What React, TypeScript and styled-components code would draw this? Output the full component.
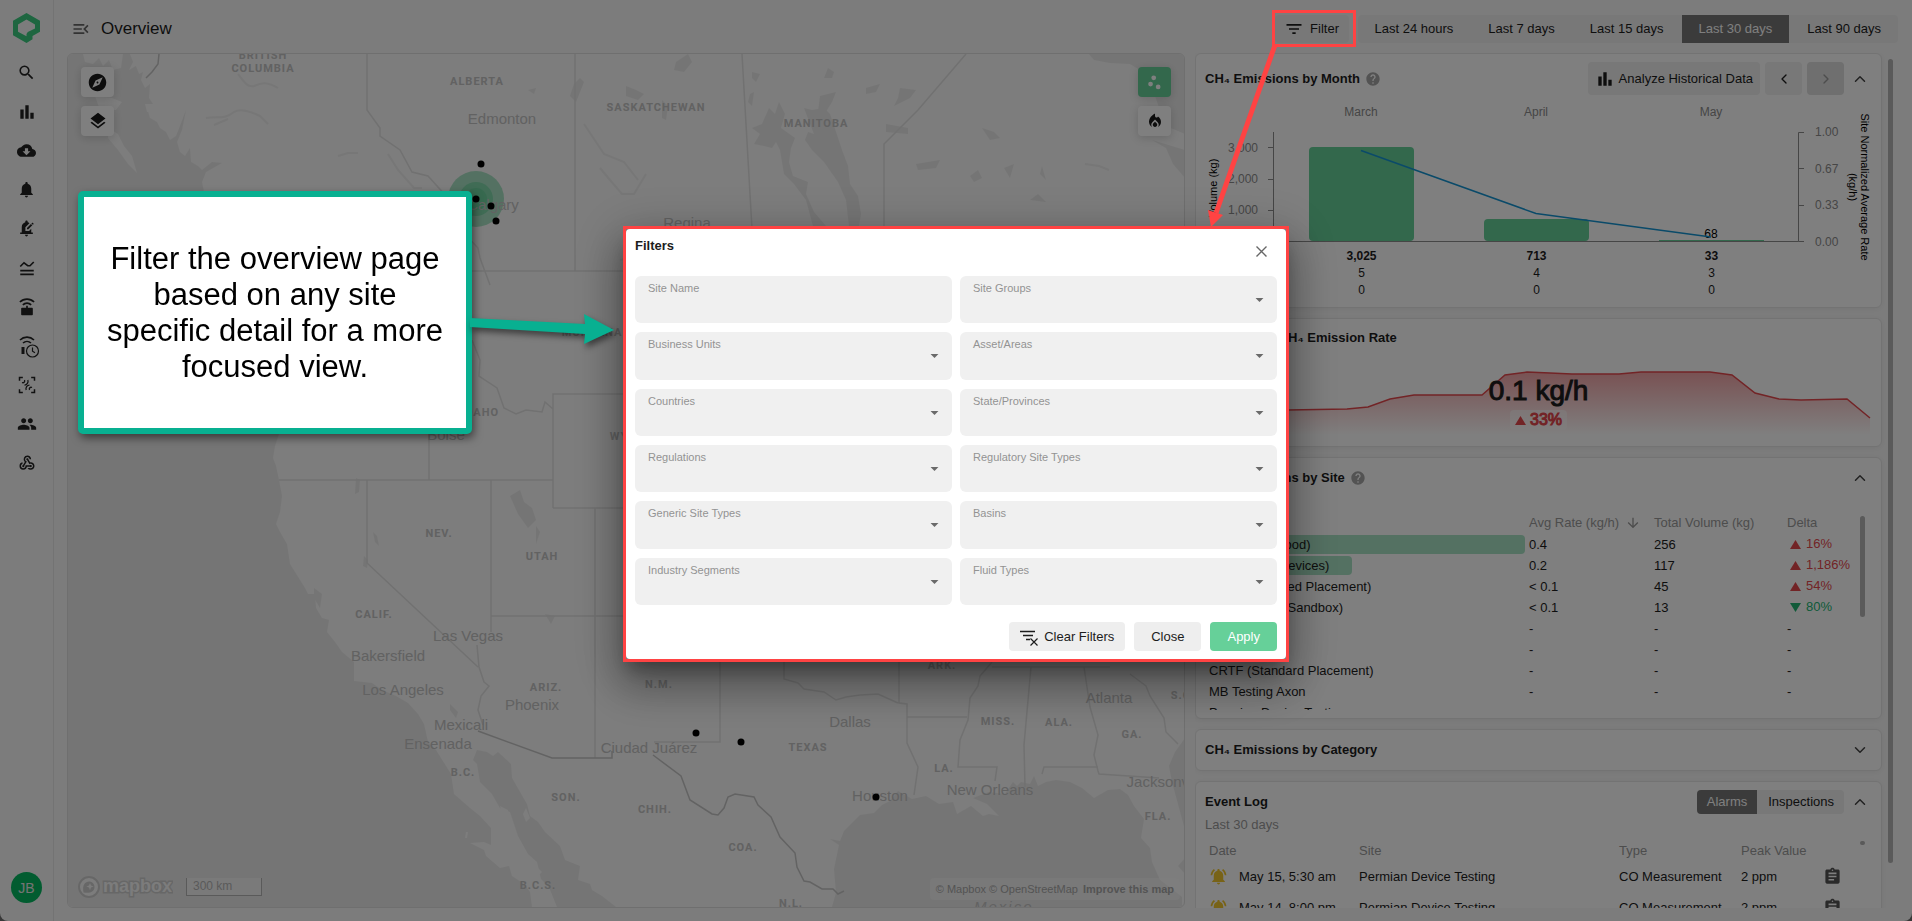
import React from 'react';
import styled, { createGlobalStyle, css } from 'styled-components';
import {
  MdArrowDownward,
  MdArrowDropDown,
  MdAssignment,
  MdBarChart,
  MdCloudDownload,
  MdEditNotifications,
  MdExplore,
  MdFilterList,
  MdHelp,
  MdLayers,
  MdLocalFireDepartment,
  MdMenuOpen,
  MdNotifications,
  MdNotificationsActive,
  MdPeople,
  MdScatterPlot,
  MdSearch,
  MdWebhook,
} from 'react-icons/md';
import { ChevronDown, ChevronLeft, ChevronRight, ChevronUp } from 'lucide-react';

const color = {
  page: '#f9f9f9',
  card: '#ffffff',
  line: '#e6e6e6',
  control: '#f0f0f0',
  active: '#767676',
  ink: '#1c1c1c',
  muted: '#9a9a9a',
  green: '#66d099',
  red: '#e5484d',
  callout: '#08b091',
  marker: '#ff4343',
};

const GlobalStyle = createGlobalStyle`
  *, *::before, *::after { box-sizing: border-box; }
  html, body, #root { height: 100%; }
  body {
    margin: 0;
    background: #707070;
    color: ${color.ink};
    font: 13px/16px "Liberation Sans", Arial, sans-serif;
    overflow: hidden;
  }
  button, input, select { font: inherit; color: inherit; }
  h1, h2, p, figure { margin: 0; }
`;

/* ---------- Shell ---------- */

const Shell = styled.div`
  display: flex;
  height: 100vh;
  background: ${color.page};
  border-radius: 0 0 8px 8px;
  overflow: hidden;
`;

const Sidebar = styled.nav`
  display: flex;
  flex-direction: column;
  align-items: center;
  flex: none;
  width: 54px;
  padding: 13px 0 18px;
  border-right: 1px solid ${color.line};
`;

const SideLink = styled.a`
  display: flex;
  align-items: center;
  justify-content: center;
  width: 39px;
  height: 39px;
  color: #222;
`;

const SideList = styled.div`
  display: flex;
  flex-direction: column;
  flex: 1;
  margin-top: 10px;
`;

const Avatar = styled.button`
  width: 31px;
  height: 31px;
  padding: 0;
  border: 0;
  border-radius: 50%;
  background: #04b860;
  color: #e8e8e8;
  font-size: 14px;
`;

const Page = styled.div`
  display: flex;
  flex-direction: column;
  flex: 1;
  min-width: 0;
  padding: 0 14px 13px 13px;
`;

const TopBar = styled.header`
  display: flex;
  align-items: center;
  flex: none;
  height: 53px;
  padding: 5px 0 0;
`;

const MenuButton = styled.button`
  display: flex;
  padding: 0;
  margin: 0 10px 0 4px;
  border: 0;
  background: none;
  color: #666;
`;

const PageTitle = styled.h1`
  flex: 1;
  font-size: 17px;
  line-height: 20px;
  font-weight: 400;
`;

const softButton = css`
  display: flex;
  align-items: center;
  justify-content: center;
  border: 0;
  border-radius: 4px;
  background: ${color.control};
  white-space: nowrap;
`;

const FilterAnchor = styled.div`
  position: relative;
  margin-right: 9px;
`;

const FilterButton = styled.button`
  ${softButton}
  gap: 6px;
  width: 74px;
  height: 28px;
  padding: 0;
`;

const Highlight = styled.div`
  position: absolute;
  inset: -5px -7px -4px -3px;
  border: 3px solid ${color.marker};
  z-index: 30;
`;

const FilterArrow = styled.svg`
  position: absolute;
  left: -67px;
  top: 28px;
  z-index: 30;
  pointer-events: none;
`;

const Segments = styled.div`
  display: flex;
  gap: 1px;
  overflow: hidden;
  border-radius: 4px;
  background: ${color.control};
`;

const Segment = styled.button<{ $active?: boolean; $small?: boolean }>`
  height: ${(p) => (p.$small ? 24 : 28)}px;
  padding: 0 ${(p) => (p.$small ? 10 : 17)}px;
  border: 0;
  background: ${(p) => (p.$active ? color.active : 'transparent')};
  color: ${(p) => (p.$active ? '#fff' : color.ink)};
  white-space: nowrap;
`;

const Columns = styled.main`
  display: grid;
  grid-template-columns: minmax(0, 1118fr) minmax(0, 703fr);
  gap: 10px;
  flex: 1;
  min-height: 0;
`;

/* ---------- Map ---------- */

const MapPanel = styled.section`
  position: relative;
  overflow: hidden;
  border: 1px solid #dedede;
  border-radius: 6px;
  background: #fafafa;
`;

const MapCanvas = styled.svg`
  display: block;
  width: 100%;
  height: 100%;
`;

const MapTools = styled.div<{ $side: 'left' | 'right' }>`
  position: absolute;
  top: 13px;
  ${(p) => p.$side}: 13px;
  display: flex;
  flex-direction: column;
  gap: 9px;
`;

const MapTool = styled.button<{ $on?: boolean }>`
  display: flex;
  align-items: center;
  justify-content: center;
  width: 33px;
  height: 30px;
  padding: 0;
  border: 0;
  border-radius: 4px;
  background: ${(p) => (p.$on ? color.green : '#fff')};
  color: ${(p) => (p.$on ? '#fff' : '#1a1a1a')};
  box-shadow: 0 2px 10px rgba(0, 0, 0, 0.16);
`;

const MapFooter = styled.div`
  position: absolute;
  left: 9px;
  bottom: 8px;
  display: flex;
  align-items: center;
  gap: 13px;
`;

const ScaleBar = styled.div`
  width: 76px;
  height: 18px;
  padding-left: 6px;
  border: 1px solid #b4b4b4;
  border-top: 0;
  background: rgba(255, 255, 255, 0.5);
  color: #b4b4b4;
  font-size: 12px;
  line-height: 17px;
`;

const Attribution = styled.div`
  position: absolute;
  right: 4px;
  bottom: 7px;
  display: flex;
  gap: 3px;
  padding: 3px 6px;
  border-radius: 4px;
  background: rgba(255, 255, 255, 0.35);
  font-size: 11px;

  a {
    color: #a8a8a8;
    text-decoration: none;
  }
  a:last-child {
    margin-left: 2px;
    font-weight: 700;
  }
`;

/* ---------- Cards ---------- */

const SidePanel = styled.aside`
  display: flex;
  min-height: 0;
  overflow: hidden;
`;

const CardStack = styled.div`
  display: flex;
  flex-direction: column;
  flex: 1;
  gap: 10px;
  min-width: 0;
`;

const PanelThumb = styled.div`
  flex: none;
  width: 5px;
  height: 94%;
  margin: 6px 5px 0 6px;
  border-radius: 3px;
  background: #b4b4b4;
`;

const Card = styled.section`
  position: relative;
  flex: none;
  padding: 8px 9px;
  border: 1px solid ${color.line};
  border-radius: 6px;
  background: ${color.card};
  box-shadow: 0 1px 6px rgba(0, 0, 0, 0.06);
`;

const CardHead = styled.div<{ $low?: boolean }>`
  display: flex;
  align-items: center;
  min-height: ${(p) => (p.$low ? 22 : 24)}px;
`;

const CardTitle = styled.h2`
  display: flex;
  align-items: center;
  gap: 5px;
  flex: 1;
  font-size: 13px;
  font-weight: 700;
  white-space: nowrap;

  svg {
    color: #a6a6a6;
  }
`;

const ToolGroup = styled.div`
  display: flex;
  gap: 5px;
`;

const ToolButton = styled.button<{ $dim?: boolean }>`
  ${softButton}
  gap: 4px;
  min-width: 37px;
  height: 33px;
  padding: 0 7px;
  background: ${(p) => (p.$dim ? '#dedede' : color.control)};
  color: ${(p) => (p.$dim ? '#9a9a9a' : color.ink)};
`;

const Toggle = styled.button`
  display: flex;
  margin: 0 3px 0 7px;
  padding: 0;
  border: 0;
  background: none;
  color: #444;
`;

const Chart = styled.svg`
  display: block;
  width: 100%;
  overflow: visible;
`;

const MonthTable = styled.table`
  width: 100%;
  table-layout: fixed;
  border-collapse: collapse;
  font-size: 12px;
  line-height: 17px;
  text-align: center;

  td {
    padding: 0;
  }
  tr:first-child td {
    font-weight: 700;
  }
  col:first-child {
    width: 69px;
  }
  col:last-child {
    width: 73px;
  }
`;

const Readout = styled.div`
  position: absolute;
  left: 0;
  right: 0;
  top: 55px;
  display: flex;
  flex-direction: column;
  align-items: center;
`;

const ReadoutValue = styled.div`
  font-size: 28px;
  line-height: 34px;
  -webkit-text-stroke: 1px ${color.ink};
  paint-order: stroke;
`;

const ReadoutChip = styled.div`
  display: flex;
  align-items: center;
  gap: 4px;
  height: 20px;
  margin-top: 2px;
  padding: 0 5px;
  border-radius: 4px;
  background: rgba(255, 255, 255, 0.5);
  color: ${color.red};
  font-size: 16px;
  -webkit-text-stroke: 1px ${color.red};
  paint-order: stroke;
`;

const TableFrame = styled.div<{ $height: number; $top: number }>`
  display: flex;
  align-items: flex-start;
  height: ${(p) => p.$height}px;
  margin-top: ${(p) => p.$top}px;
  overflow: hidden;
`;

const TableThumb = styled.div<{ $height: number; $top: number }>`
  flex: none;
  width: 5px;
  height: ${(p) => p.$height}px;
  margin: ${(p) => p.$top}px 7px 0 3px;
  border-radius: 3px;
  background: #b4b4b4;
`;

const DataTable = styled.table<{ $row: number; $head: number }>`
  flex: 1;
  width: 100%;
  min-width: 0;
  table-layout: fixed;
  border-collapse: collapse;
  text-align: left;
  white-space: nowrap;

  th {
    height: ${(p) => p.$head}px;
    padding: 0 0 0 4px;
    color: ${color.muted};
    font-weight: 400;
  }
  th svg {
    margin: 0 0 -4px 6px;
  }
  td {
    height: ${(p) => p.$row}px;
    padding: 0 0 0 4px;
  }
  td svg {
    display: block;
  }
`;

const NameCell = styled.td`
  && {
    padding: 0;
  }
`;

const NameBar = styled.div<{ $filled: boolean }>`
  height: 19px;
  padding-left: 4px;
  border-radius: 4px;
  background: ${(p) => (p.$filled ? '#a9e2c5' : 'transparent')};
  line-height: 19px;
`;

const Trend = styled.span<{ $down?: boolean }>`
  display: inline-flex;
  align-items: center;
  gap: 5px;
  padding-left: 3px;
  color: ${(p) => (p.$down ? '#22b573' : color.red)};
`;

const EventDate = styled.span`
  display: flex;
  align-items: center;
  gap: 11px;

  svg {
    color: #f0c62f;
  }
`;

const Subtitle = styled.p`
  margin-top: 3px;
  color: ${color.muted};
`;

/* ---------- Dialog ---------- */

const Backdrop = styled.div`
  position: fixed;
  inset: 0;
  z-index: 20;
  display: flex;
  align-items: center;
  justify-content: center;
  padding-bottom: 33px;
  background: rgba(0, 0, 0, 0.5);
`;

const DialogOutline = styled.div`
  width: 666px;
  max-width: 100%;
  border: 3px solid ${color.marker};
  box-shadow: 0 12px 18px -6px rgba(0, 0, 0, 0.35), 0 24px 40px 4px rgba(0, 0, 0, 0.24),
    0 10px 46px 8px rgba(0, 0, 0, 0.18);
`;

const Dialog = styled.form`
  padding: 0 9px 8px;
  border-radius: 4px;
  background: #fff;
`;

const DialogHead = styled.div`
  display: flex;
  justify-content: space-between;
  height: 47px;
  padding: 9px 10px 0 0;
`;

const DialogTitle = styled.h2`
  font-size: 13px;
  font-weight: 700;
`;

const DialogClose = styled.button`
  display: flex;
  height: 12px;
  margin-top: 8px;
  padding: 0;
  border: 0;
  background: none;
`;

const Fields = styled.div`
  display: grid;
  grid-template-columns: 1fr 1fr;
  grid-template-rows: repeat(6, 1fr);
  gap: 9px 8px;
  height: 329px;
`;

const Field = styled.div`
  position: relative;
  display: grid;
  border-radius: 6px;
  background: #f0f0f0;

  label {
    position: absolute;
    left: 13px;
    top: 5px;
    color: #939393;
    font-size: 11px;
    line-height: 14px;
    pointer-events: none;
  }
  input,
  select {
    width: 100%;
    padding: 16px 34px 4px 13px;
    border: 0;
    border-radius: 6px;
    outline: 0;
    background: transparent;
    appearance: none;
  }
  svg {
    position: absolute;
    right: 8px;
    top: 14px;
    color: #6a6a6a;
    pointer-events: none;
  }
`;

const DialogActions = styled.div`
  display: flex;
  justify-content: flex-end;
  gap: 9px;
  margin-top: 17px;
`;

const ActionButton = styled.button<{ $primary?: boolean }>`
  ${softButton}
  gap: 6px;
  height: 29px;
  padding: 0 17px;
  background: ${(p) => (p.$primary ? color.green : '#eeeeee')};
  color: ${(p) => (p.$primary ? '#fff' : color.ink)};

  &:first-child {
    padding: 0 11px;
  }
`;

/* ---------- Callout ---------- */

const Callout = styled.div`
  position: absolute;
  left: 78px;
  top: 191px;
  z-index: 30;
  display: flex;
  align-items: center;
  justify-content: center;
  width: 394px;
  height: 243px;
  border: 6px solid ${color.callout};
  border-radius: 5px;
  background: #fff;
  box-shadow: 2px 4px 8px rgba(0, 0, 0, 0.5);
  color: #000;
  font-size: 31px;
  line-height: 36px;
  text-align: center;
`;

const CalloutText = styled.p`
  width: 350px;
`;

const CalloutArrow = styled.svg`
  position: absolute;
  left: 386px;
  top: 110px;
  filter: drop-shadow(2px 4px 3px rgba(0, 0, 0, 0.5));
`;

/* ---------- Drawn icons ---------- */

const Logo = () => (
  <svg width="27" height="30" viewBox="0 0 27 30" aria-label="Home">
    <path
      fill="#3ccc80"
      fillRule="evenodd"
      d="M13.500 0 27 7.700v11L19.500 23v3.300L13.500 30 0 22.200V7.700zM13.500 6.500 5 11.500v7.300l8.500 4.400V21l1.300-2L22 15.500v-4z"
    />
  </svg>
);

const SensorIcon = () => (
  <svg width="20" height="20" viewBox="0 0 24 24" fill="none" stroke="currentColor" strokeWidth="2">
    <path d="M3.500 6a12 12 0 0 1 17 0M7 9.500a7 7 0 0 1 10 0M12 10.500v3" />
    <path d="M6 13h12a1 1 0 0 1 1 1v7a1 1 0 0 1-1 1H6a1 1 0 0 1-1-1v-7a1 1 0 0 1 1-1z" fill="currentColor" stroke="none" />
  </svg>
);

const SensorClockIcon = () => (
  <svg width="26" height="24" viewBox="0 0 26 24" fill="none" stroke="currentColor" strokeWidth="1.600">
    <path d="M6 6a10 10 0 0 1 14 0M9 9a6 6 0 0 1 8 0" />
    <path d="M9 13v7" strokeWidth="3" />
    <circle cx="18.500" cy="17" r="6" strokeWidth="1.200" />
    <path d="M18.500 13.500v3.700l2.500 1.500" strokeWidth="1.200" />
  </svg>
);

const ApproxIcon = () => (
  <svg width="18" height="18" viewBox="0 0 24 24" fill="none" stroke="currentColor" strokeWidth="2.200">
    <path d="m3 10 5-5 5 4 3 0 5-5M3 15.500h18M3 20.500h18" />
  </svg>
);

const ScanIcon = () => (
  <svg width="20" height="20" viewBox="0 0 24 24" fill="none" stroke="currentColor" strokeWidth="1.800">
    <path d="M3 7V3h4M17 3h4v4M21 17v4h-4M7 21H3v-4" />
    <path d="M6 9c2 1 4-1 3-3M9 12c3 0 5-3 4-6M18 15c-2-1-4 1-3 3M15 12c-3 0-5 3-4 6" strokeWidth="1.500" />
  </svg>
);

const FilterClearIcon = () => (
  <svg width="18" height="18" viewBox="0 0 18 18" fill="none" stroke="currentColor">
    <path d="M0 3.500h15M3 7.500h10M6 11.500h4" strokeWidth="1.700" />
    <path d="m10.500 10.500 7 7m0-7-7 7" strokeWidth="1.200" />
  </svg>
);

const CloseIcon = () => (
  <svg width="11" height="11" viewBox="0 0 11 11" fill="none" stroke="#666" strokeWidth="1.400">
    <path d="m.5.5 10 10m0-10-10 10" />
  </svg>
);

const Triangle = ({ down }: { down?: boolean }) => (
  <svg width="11" height="9" viewBox="0 0 11 9" fill="currentColor" aria-hidden="true">
    <path d={down ? 'M0 0h11L5.500 9z' : 'M0 9h11L5.500 0z'} />
  </svg>
);

const MapboxMark = () => (
  <svg width="96" height="24" viewBox="0 0 96 24" aria-label="mapbox">
    <circle cx="12" cy="12" r="10" fill="#f8f8f8" stroke="#cfcfcf" strokeWidth="2" />
    <path d="M6.500 17.500C5 10 8 6.500 12.500 6.500a5.300 5.300 0 0 1 5 5.500c0 4.500-4 6.500-11 5.500z" fill="#cfcfcf" />
    <path d="m13 8 1 2.600 2.600 1-2.600 1-1 2.600-1-2.600-2.600-1 2.600-1z" fill="#f8f8f8" />
    <text x="26" y="17" fontSize="18" fontWeight="700" fill="#f8f8f8" stroke="#cfcfcf" strokeWidth="3" paintOrder="stroke">
      mapbox
    </text>
  </svg>
);

/* ---------- Data ---------- */

const sideItems = [
  { name: 'Search', icon: <MdSearch size={19} /> },
  { name: 'Analytics', icon: <MdBarChart size={20} /> },
  { name: 'Downloads', icon: <MdCloudDownload size={19} /> },
  { name: 'Alarms', icon: <MdNotifications size={19} /> },
  { name: 'Alarm settings', icon: <MdEditNotifications size={19} /> },
  { name: 'Thresholds', icon: <ApproxIcon /> },
  { name: 'Devices', icon: <SensorIcon /> },
  { name: 'Device history', icon: <SensorClockIcon /> },
  { name: 'Scans', icon: <ScanIcon /> },
  { name: 'Users', icon: <MdPeople size={20} /> },
  { name: 'Webhooks', icon: <MdWebhook size={18} /> },
];

const ranges = ['Last 24 hours', 'Last 7 days', 'Last 15 days', 'Last 30 days', 'Last 90 days'];

const filters = [
  'Site Name',
  'Site Groups',
  'Business Units',
  'Asset/Areas',
  'Countries',
  'State/Provinces',
  'Regulations',
  'Regulatory Site Types',
  'Generic Site Types',
  'Basins',
  'Industry Segments',
  'Fluid Types',
];

const months = [
  { name: 'March', x: 165 },
  { name: 'April', x: 340 },
  { name: 'May', x: 515 },
];

const sites = [
  { name: 'CRTF (Driftwood)', rate: '0.4', volume: '256', share: 100, delta: '16%' },
  { name: 'CRTF (Test Devices)', rate: '0.2', volume: '117', share: 46, delta: '1,186%' },
  { name: 'CRTF (Realized Placement)', rate: '< 0.1', volume: '45', share: 18, delta: '54%' },
  { name: 'CRTF (Other Sandbox)', rate: '< 0.1', volume: '13', share: 5, delta: '80%', down: true },
  { name: '', rate: '-', volume: '-', share: 0 },
  { name: '', rate: '-', volume: '-', share: 0 },
  { name: 'CRTF (Standard Placement)', rate: '-', volume: '-', share: 0 },
  { name: 'MB Testing Axon', rate: '-', volume: '-', share: 0 },
  { name: 'Permian Device Testing', rate: '', volume: '', share: 0 },
];

const events = [
  { date: 'May 15, 5:30 am', value: '2 ppm' },
  { date: 'May 14, 8:00 pm', value: '2 ppm' },
];

const regions: [string, number, number][] = [
  ['BRITISH', 263, 59], ['COLUMBIA', 263, 72], ['ALBERTA', 477, 85], ['SASKATCHEWAN', 656, 111],
  ['MANITOBA', 816, 127], ['NEV.', 439, 537], ['UTAH', 542, 560], ['CALIF.', 374, 618],
  ['ARIZ.', 546, 691], ['B.C.', 463, 776], ['SON.', 566, 801], ['B.C.S.', 538, 889],
  ['N.M.', 659, 688], ['TEXAS', 808, 751], ['CHIH.', 655, 813], ['COA.', 743, 851],
  ['N.L.', 791, 907], ['ARK.', 942, 669], ['MISS.', 998, 725], ['ALA.', 1059, 726],
  ['GA.', 1132, 738], ['S.C.', 1183, 699], ['LA.', 944, 772], ['FLA.', 1158, 820],
  ['MONTANA', 592, 336], ['IDAHO', 480, 416], ['WYO.', 625, 440],
];

const cities: [string, number, number][] = [
  ['Edmonton', 502, 124], ['Calgary', 493, 210], ['Regina', 687, 228], ['Las Vegas', 468, 641],
  ['Bakersfield', 388, 661], ['Los Angeles', 403, 695], ['Phoenix', 532, 710], ['Mexicali', 461, 730],
  ['Ensenada', 438, 749], ['Ciudad Juárez', 649, 753], ['Dallas', 850, 727], ['Atlanta', 1109, 703],
  ['New Orleans', 990, 795], ['Houston', 880, 801], ['Jacksonville', 1167, 787], ['Boise', 446, 440],
];

const pins = [[481, 164], [476, 199], [491, 206], [496, 221], [696, 733], [741, 742], [876, 797]];

/* ---------- Parts ---------- */

const SiteMap = () => (
  <MapPanel aria-label="Site map">
    <MapCanvas viewBox="68 54 1117 853" preserveAspectRatio="xMinYMin slice">
      <g fill="#ebebeb">
        <path d="M68 54H83L85 62 93 64 99 58 103 66 109 60 113 70 121 68 123 54H130L133 62 129 70 136 66 139 74 143 72 141 80 145 88 150 84 149 98 153 104 147 108 150 118 157 122 160 128 166 132 170 140 176 136 180 126 186 110 182 130 177 142 180 152 185 156 190 148 191 162 198 166 202 170 212 162 222 163 206 172 202 182 204 192 230 240 250 300 268 370 279 434 275 446 273 458 276 466 279 480 282 496 280 512 276 524 280 532 287 544 290 564 300 580 305 588 308 594 315 594 316 608 322 618 329 620 327 632 335 642 342 652 354 662V681L372 683 382 690 396 696 408 703 418 714 424 724 428 742 436 750 446 766 451 774 454 794 470 808 480 816 491 828V845L484 842 470 843 484 850 486 856 500 868 509 866 512 876 524 884 530 892 532 907H68z" />
        <path d="M557 907L549 887 541 879 537 862 528 854 518 836 510 812 500 808 492 794 480 782 477 764 473 760 477 750 487 752 493 756 498 752 511 764 512 778 520 792 527 804 530 816 538 822 545 832 560 846 565 860 580 866 578 880 590 884 592 890 602 896 616 907z" />
        <path d="M832 907L836 893 834 869 839 845 830 839 840 841 844 831 852 823 860 815 874 813 882 805 890 801 898 791 912 799 926 796 939 804 953 802 957 814 971 806 983 816 989 814 999 816 987 804 973 798 989 792 1005 794 1013 782 1017 786 1021 782 1030 784 1034 776 1038 786 1046 782 1056 780 1070 782 1082 788 1094 798 1108 790 1120 789 1128 795 1134 806 1144 819 1141 838 1150 848 1152 862 1160 880 1172 889 1182 897V907z" />
        <path d="M1185 738L1175 752 1169 766 1172 782 1178 804 1185 830zM1185 858L1178 866 1185 874zM1089 54L1094 60 1110 63 1130 64 1140 70 1152 88 1160 110 1166 126 1185 134V54zM1152 140L1185 150V178L1173 164 1166 148z" />
        <path d="M804 108L812 110 824 108 830 114 842 150 848 166 850 184 858 196 861 214 859 226H849L846 200 838 182 824 162 812 150 805 140 808 132 814 134z" />
        <path d="M769 108L775 114 779 102 785 114 781 128 795 138 791 148 789 162 793 176 808 182 806 194 814 212 826 226H813L806 200 794 184 784 174 780 150 776 142 772 148 764 146 754 144 760 134 752 128 762 124z" />
        <path d="M676 62L688 54 692 62 684 72 674 70zM626 86L636 90 644 94 638 100 626 96zM662 100L668 106 666 120 662 118zM752 72L760 74 756 82 752 78zM750 94L754 92 752 106 748 102zM828 68L834 72 832 78H824zM866 88L880 84 876 92 866 94zM900 88L916 90 910 98 894 106 898 98zM820 96L836 92 832 102 822 118 818 112zM886 124L908 128V134L886 132zM982 128L994 132 1000 138 990 140zM916 164L940 160 936 168 918 170zM970 176L978 170 982 178 974 182zM1004 168L1014 164 1010 178zM1042 166L1046 180 1040 174zM1030 200L1038 194 1046 202zM962 254L976 246 988 240 984 248zM920 240L928 238 926 246z" />
        <path d="M510 496l10-6 4 12 8 6 4 12-8 8-10-14zM356 478l4 2-1 12-4 2zM373 532l4 4 2 10-4-4zM536 526l4 6-4 12zM545 614l10 2-4 8zM450 704l8 8-2 6-6-8zM364 556l4 4-1 8-4-2zM314 588l8 6-2 14-6-10zM528 90l8-2-2 6zM574 84l6-6 4 4-4 10-4 10-6-6z" />
      </g>
      <g fill="#fafafa">
        <path d="M95 96L112 98 122 102 116 110 100 110zM108 128L118 134 124 146 132 156 137 173 128 164 118 150 108 138zM145 104l8 0 0 8-6 0z" />
        <path d="M500 806l8 4v10l-6-6zM526 808l4 10-4 4-3-8zM536 866l6 6-4 4zM466 832l2 0-1 6-2 0z" />
      </g>
      <g fill="none" stroke="#eeeeee" strokeWidth="2">
        <path d="M206 118c12-2 18 2 28-6 6-4 18 0 26 4l8 8M214 125l14-6M238 74c6 8 10 14 16 12 8-4 14-4 24 2M338 156l10-3 10 0M388 154l10 16 16 18 8 0" />
        <path d="M584 124l20 30 20 8 14 18M600 168l10 12 12 14 12 0 12-20M620 260l22-4 4-18 14 8M1085 164l14 2 10 4" />
      </g>
      <g fill="none" stroke="#e2e2e2" strokeWidth="1.500">
        <path d="M367 54v56l13 18v8l20 14 12 22 16 4 18 20 8 26 24 26 2 10 10 27M575 54v217M742 54l10 175M966 54l-48 56-34 34v90M472 271h152" />
        <path d="M472 340l8 20-1 16 18 12 7 20 12 6 10-4 16 2 3-10 8 7M553 508V394h71M553 508h71M279 480h274M429 434v46M367 480v83l111 104M491 480v152M477 645l2 22 5 15 5 4-8 10-3 14 5 15M491 616h133M595 508v250" />
        <path d="M720 662v80h-66M784 662v17l14 4 6 6 20 3 12 8 10-3 14-2 18-1 20 9M899 662v41l8 1v39l11 24-4 28M907 717h60M992 662l-12 14-2 10-8 12-2 22-8 20-2 27h39l-2 14M992 667h118M1031 667l-7 78 1 42M1084 667l6 40 8 28-4 20 4 16 1 3 60 4M1042 774l2-7h54M1130 674l16 12 4 10 14 22 2 14 12 12" />
      </g>
      <g fill="none" stroke="#c6c6c6" strokeWidth="1.500">
        <path d="M159 54l-1 10-6 8-6 6" />
        <path d="M478 731l74 27h60v-7M653 755l28 21 9 24 22 14 6 1 6-7 4-11 7-3 19 3 4 8 13 12 9 20 15 16 2 14 7 14 6 1 12 7 11 0 5 5 6-3" />
      </g>
      <g fill={color.green}>
        <circle cx="476" cy="199" r="28" opacity=".55" />
        <circle cx="476" cy="199" r="17" opacity=".6" />
        <circle cx="476" cy="199" r="11" opacity=".7" />
      </g>
      <g textAnchor="middle" fill="#c4c4c4" fontFamily="Roboto, sans-serif" fontSize="11" fontWeight="700" letterSpacing="1">
        {regions.map(([name, x, y]) => (
          <text key={name} x={x} y={y}>{name}</text>
        ))}
      </g>
      <text x="974" y="912" fontSize="15" fontStyle="italic" fill="#c4c4c4" letterSpacing="2">Mexico</text>
      <g textAnchor="middle" fill="#c4c4c4" fontSize="15">
        {cities.map(([name, x, y]) => (
          <text key={name} x={x} y={y}>{name}</text>
        ))}
      </g>
      {pins.map(([x, y]) => (
        <circle key={x} cx={x} cy={y} r="3.500" fill="#000" />
      ))}
    </MapCanvas>
    <MapTools $side="left">
      <MapTool aria-label="Explore"><MdExplore size={21} /></MapTool>
      <MapTool aria-label="Layers"><MdLayers size={20} /></MapTool>
    </MapTools>
    <MapTools $side="right">
      <MapTool $on aria-label="Clusters"><MdScatterPlot size={19} /></MapTool>
      <MapTool aria-label="Heat map"><MdLocalFireDepartment size={18} /></MapTool>
    </MapTools>
    <MapFooter>
      <MapboxMark />
      <ScaleBar>300 km</ScaleBar>
    </MapFooter>
    <Attribution>
      <a href="#mapbox">© Mapbox</a>
      <a href="#osm">© OpenStreetMap</a>
      <a href="#improve">Improve this map</a>
    </Attribution>
  </MapPanel>
);

const MonthCard = () => (
  <Card>
    <CardHead>
      <CardTitle>CH₄ Emissions by Month <MdHelp size={16} /></CardTitle>
      <ToolGroup>
        <ToolButton><MdBarChart size={20} />Analyze Historical Data</ToolButton>
        <ToolButton aria-label="Previous"><ChevronLeft size={16} /></ToolButton>
        <ToolButton $dim aria-label="Next"><ChevronRight size={16} /></ToolButton>
      </ToolGroup>
      <Toggle aria-label="Collapse"><ChevronUp size={18} /></Toggle>
    </CardHead>
    <Chart viewBox="9 -1 667 153" fontSize="12">
      <g fill="#8c8c8c" textAnchor="middle">
        {months.map((m) => (
          <text key={m.name} x={m.x} y="20">{m.name}</text>
        ))}
      </g>
      <g fill={color.green}>
        <rect x="113" y="51" width="105" height="94" rx="4" />
        <rect x="288" y="123" width="105" height="22" rx="4" />
        <rect x="463" y="144" width="105" height="1" />
      </g>
      <g stroke="#8c8c8c" fill="none">
        <path d="M77.500 36v109.500H602.500M72 51.500h6M72 83.500h6M72 114.500h6" />
        <path d="M608 36.500h-5.500v109h5.500M602 72.500h6M602 109.500h6" />
      </g>
      <g fill="#8c8c8c">
        <text x="62" y="56" textAnchor="end">3,000</text>
        <text x="62" y="87" textAnchor="end">2,000</text>
        <text x="62" y="118" textAnchor="end">1,000</text>
        <text x="619" y="40">1.00</text>
        <text x="619" y="77">0.67</text>
        <text x="619" y="113">0.33</text>
        <text x="619" y="150">0.00</text>
      </g>
      <text x="515" y="142" textAnchor="middle">68</text>
      <path d="M165 54.500 340 117.500 515 141" fill="none" stroke="#1595d3" strokeWidth="1.500" />
      <g fontSize="11" textAnchor="middle">
        <text transform="translate(21 92) rotate(-90)">Volume (kg)</text>
        <text transform="translate(665 91) rotate(90)">Site Normalized Average Rate</text>
        <text transform="translate(653 91) rotate(90)">(kg/h)</text>
      </g>
    </Chart>
    <MonthTable>
      <colgroup><col /><col /><col /><col /><col /></colgroup>
      <tbody>
        <tr><td /><td>3,025</td><td>713</td><td>33</td><td /></tr>
        <tr><td /><td>5</td><td>4</td><td>3</td><td /></tr>
        <tr><td /><td>0</td><td>0</td><td>0</td><td /></tr>
      </tbody>
    </MonthTable>
  </Card>
);

const RATE_LINE =
  'M9 63 92 61 151 60 172 58 194 50 218 46 286 46 309 26 331 23 354 24 376 25 423 25 445 23 514 23 536 26 559 44 583 50 605 51 651 50 674 69';

const RateCard = () => (
  <Card>
    <CardHead $low>
      <CardTitle>Normalized CH₄ Emission Rate</CardTitle>
    </CardHead>
    <Chart viewBox="9 0 667 89">
      <defs>
        <linearGradient id="rate" x1="0" y1="0" x2="0" y2="1">
          <stop offset="0" stopColor="#e5484d" stopOpacity=".5" />
          <stop offset="1" stopColor="#e5484d" stopOpacity="0" />
        </linearGradient>
      </defs>
      <path d={`${RATE_LINE}V86H9z`} fill="url(#rate)" />
      <path d={RATE_LINE} fill="none" stroke={color.red} strokeWidth="1.500" />
    </Chart>
    <Readout>
      <ReadoutValue>0.1 kg/h</ReadoutValue>
      <ReadoutChip><Triangle />33%</ReadoutChip>
    </Readout>
  </Card>
);

const SiteCard = () => (
  <Card>
    <CardHead>
      <CardTitle>CH₄ Emissions by Site <MdHelp size={16} /></CardTitle>
      <Toggle aria-label="Collapse"><ChevronUp size={18} /></Toggle>
    </CardHead>
    <TableFrame $height={198} $top={22}>
      <DataTable $row={21} $head={22}>
        <colgroup>
          <col />
          <col width="125" />
          <col width="133" />
          <col width="74" />
        </colgroup>
        <thead>
          <tr>
            <th aria-label="Site" />
            <th>Avg Rate (kg/h)<MdArrowDownward size={16} /></th>
            <th>Total Volume (kg)</th>
            <th>Delta</th>
          </tr>
        </thead>
        <tbody>
          {sites.map((s, i) => (
            <tr key={i}>
              <NameCell>
                <NameBar $filled={s.share > 0} style={{ width: `${s.share}%` }}>{s.name}</NameBar>
              </NameCell>
              <td>{s.rate}</td>
              <td>{s.volume}</td>
              <td>
                {s.delta ? <Trend $down={s.down}><Triangle down={s.down} />{s.delta}</Trend> : s.rate && '-'}
              </td>
            </tr>
          ))}
        </tbody>
      </DataTable>
      <TableThumb $height={101} $top={4} />
    </TableFrame>
  </Card>
);

const EventCard = () => (
  <Card>
    <CardHead>
      <CardTitle>Event Log</CardTitle>
      <Segments>
        <Segment $small $active>Alarms</Segment>
        <Segment $small>Inspections</Segment>
      </Segments>
      <Toggle aria-label="Collapse"><ChevronUp size={18} /></Toggle>
    </CardHead>
    <Subtitle>Last 30 days</Subtitle>
    <TableFrame $height={120} $top={8}>
      <DataTable $row={31} $head={20}>
        <colgroup>
          <col width="150" />
          <col />
          <col width="122" />
          <col width="82" />
          <col width="38" />
        </colgroup>
        <thead>
          <tr><th>Date</th><th>Site</th><th>Type</th><th>Peak Value</th><th aria-label="Notes" /></tr>
        </thead>
        <tbody>
          {events.map((e) => (
            <tr key={e.date}>
              <td><EventDate><MdNotificationsActive size={19} />{e.date}</EventDate></td>
              <td>Permian Device Testing</td>
              <td>CO Measurement</td>
              <td>{e.value}</td>
              <td><MdAssignment size={19} color="#555" /></td>
            </tr>
          ))}
        </tbody>
      </DataTable>
      <TableThumb $height={4} $top={0} />
    </TableFrame>
  </Card>
);

const FiltersDialog = () => (
  <Backdrop>
    <DialogOutline>
      <Dialog role="dialog" aria-labelledby="filters-title">
        <DialogHead>
          <DialogTitle id="filters-title">Filters</DialogTitle>
          <DialogClose type="button" aria-label="Close dialog"><CloseIcon /></DialogClose>
        </DialogHead>
        <Fields>
          {filters.map((name, i) => {
            const id = `filter-${i}`;
            return (
              <Field key={name}>
                <label htmlFor={id}>{name}</label>
                {i === 0 ? (
                  <input id={id} type="text" />
                ) : (
                  <>
                    <select id={id} defaultValue=""><option value="" /></select>
                    <MdArrowDropDown size={19} />
                  </>
                )}
              </Field>
            );
          })}
        </Fields>
        <DialogActions>
          <ActionButton type="button"><FilterClearIcon />Clear Filters</ActionButton>
          <ActionButton type="button">Close</ActionButton>
          <ActionButton type="button" $primary>Apply</ActionButton>
        </DialogActions>
      </Dialog>
    </DialogOutline>
  </Backdrop>
);

export default function App() {
  return (
    <>
      <GlobalStyle />
      <Shell>
        <Sidebar>
          <Logo />
          <SideList>
            {sideItems.map((item) => (
              <SideLink key={item.name} href="#" aria-label={item.name}>{item.icon}</SideLink>
            ))}
          </SideList>
          <Avatar>JB</Avatar>
        </Sidebar>
        <Page>
          <TopBar>
            <MenuButton aria-label="Toggle menu"><MdMenuOpen size={20} /></MenuButton>
            <PageTitle>Overview</PageTitle>
            <FilterAnchor>
              <FilterButton><MdFilterList size={20} />Filter</FilterButton>
              <Highlight />
              <FilterArrow width="70" height="190" viewBox="0 0 70 190">
                <path d="M67 2 8 170" stroke={color.marker} strokeWidth="5" />
                <path d="M0 167l15 5L3 184z" fill={color.marker} />
              </FilterArrow>
            </FilterAnchor>
            <Segments>
              {ranges.map((r) => (
                <Segment key={r} $active={r === 'Last 30 days'}>{r}</Segment>
              ))}
            </Segments>
          </TopBar>
          <Columns>
            <SiteMap />
            <SidePanel>
              <CardStack>
                <MonthCard />
                <RateCard />
                <SiteCard />
                <Card>
                  <CardHead>
                    <CardTitle>CH₄ Emissions by Category</CardTitle>
                    <Toggle aria-label="Expand"><ChevronDown size={18} /></Toggle>
                  </CardHead>
                </Card>
                <EventCard />
              </CardStack>
              <PanelThumb />
            </SidePanel>
          </Columns>
        </Page>
      </Shell>
      <FiltersDialog />
      <Callout>
        <CalloutText>Filter the overview page based on any site specific detail for a more focused view.</CalloutText>
        <CalloutArrow width="146" height="50" viewBox="0 0 146 50">
          <path d="M0 11 115 17 114 7 144 23 114 37 115 27 0 20z" fill={color.callout} />
        </CalloutArrow>
      </Callout>
    </>
  );
}
